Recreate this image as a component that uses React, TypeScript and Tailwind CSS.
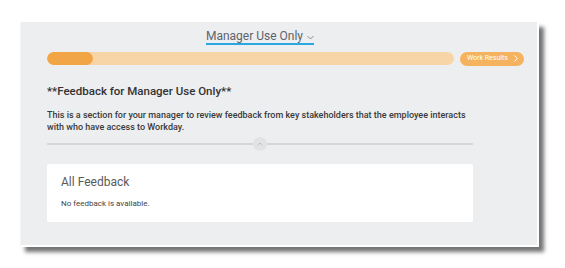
import React from "react";

export default function App() {
  const font = { fontFamily: "Roboto, 'Liberation Sans', sans-serif" };
  return (
    <div className="w-[565px] h-[268px] bg-white overflow-hidden" style={font}>
      <div className="ml-[20px] mt-[22px] w-[519px] h-[225px] bg-[#edeef0] border-l border-l-[#f6f6f7] border-r-2 border-b-2 border-r-white border-b-white shadow-[5px_5px_4px_rgba(0,0,0,0.55)] pl-[26px]">
        <div className="w-[426px] flex justify-center pt-[6px]">
          <div className="flex items-center border-b-2 border-[#2aa7df] h-[17px] leading-[16px] text-[12px] text-[#5e646c]">
            <span>Manager Use Only</span>
            <svg className="ml-[4px] mt-[3px]" width="7" height="5" viewBox="0 0 7 5" fill="none">
              <path d="M0.5 1 L3.5 4 L6.5 1" stroke="#7a8088" strokeWidth="0.9" />
            </svg>
          </div>
        </div>
        <div className="flex items-center mt-[7px] h-[13px]">
          <div className="w-[407px] h-[13px] rounded-full bg-[#f7d5a6] overflow-hidden">
            <div className="w-[46px] h-[13px] rounded-full bg-[#f2a547]" />
          </div>
          <div className="ml-[6px] w-[64px] h-[14px] rounded-full bg-[#f5b360] flex items-center pl-[7px] text-[7px] text-white leading-none">
            <span>Work Results</span>
            <svg className="ml-[6px]" width="4" height="7" viewBox="0 0 4 7" fill="none">
              <path d="M0.5 0.5 L3.3 3.5 L0.5 6.5" stroke="white" strokeWidth="1" />
            </svg>
          </div>
        </div>
        <div className="mt-[18px] text-[11.5px] leading-[16px] font-medium text-[#333]">
          **Feedback for Manager Use Only**
        </div>
        <div className="mt-[10px] w-[426px] text-[9px] leading-[12px] font-medium text-[#3a3a3a]">
          This is a section for your manager to review feedback from key stakeholders that the employee interacts with who have access to Workday.
        </div>
        <div className="relative w-[426px] h-[2px] bg-[#d6d7d9] mt-[10px]">
          <div className="absolute left-[206px] top-[-6px] w-[14px] h-[14px] rounded-full bg-[#e2e3e5] flex items-center justify-center">
            <svg width="6" height="4" viewBox="0 0 6 4" fill="none">
              <path d="M0.5 3.3 L3 1 L5.5 3.3" stroke="#b9bbbf" strokeWidth="0.9" />
            </svg>
          </div>
        </div>
        <div className="mt-[19px] w-[426px] h-[58px] bg-white rounded-[2px] pl-[14px] pt-[10px]">
          <div className="text-[12px] leading-[16px] text-[#5a5a5a]">All Feedback</div>
          <div className="mt-[9px] text-[8px] leading-[10px] text-[#444]">No feedback is available.</div>
        </div>
      </div>
    </div>
  );
}
